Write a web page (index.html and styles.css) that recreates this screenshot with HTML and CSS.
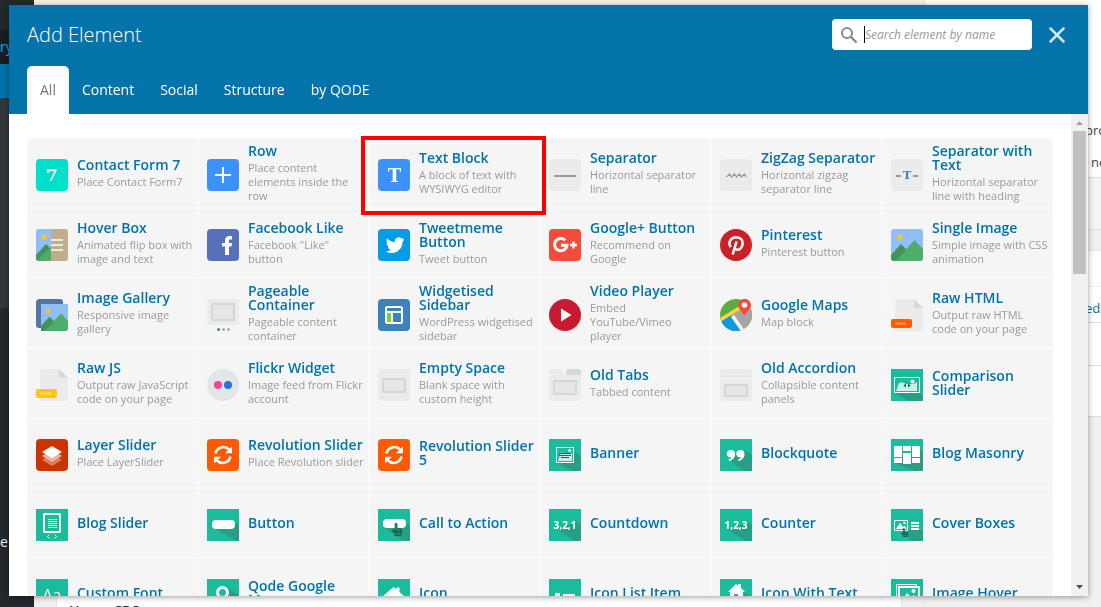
FILE: index.html
```
<!DOCTYPE html>
<html lang="en">

<head>
    <meta charset="UTF-8">
    <meta name="viewport" content="width=device-width, initial-scale=1.0">
    <title>Add Element</title>
    <link rel="stylesheet" href="styles.css">
</head>

<body>
    <!-- SHARED ICON PARTS -->
    <svg class="icon-defs" aria-hidden="true">
        <symbol id="refresh" viewBox="0 0 32 32">
            <rect width="32" height="32" rx="4" fill="#ff5a00" />
            <path d="M8.500 14.500A8 8 0 0 1 22 10.500M23.500 17.500A8 8 0 0 1 10 21.500" fill="none" stroke="#fff" stroke-width="2.500" />
            <path d="M25 7.500v6.800h-7zM7 24.500v-6.800h7z" fill="#fff" />
        </symbol>
        <symbol id="hills" viewBox="0 0 32 32">
            <path d="M0 0h32v32H0z" fill="#90bff5" />
            <circle cx="8.500" cy="8.500" r="2.700" fill="#fdc513" />
            <path d="M0 26l10-11 8 8-6 9H0z" fill="#42935b" />
            <path d="M5 32L23.500 11 32 20v12z" fill="#4dae6c" />
        </symbol>
        <symbol id="hand" viewBox="0 0 12 14">
            <path d="M3.500 1.500a1.500 1.500 0 0 1 3 0V5l4 1a1.500 1.500 0 0 1 1 1.500V10l-1 1.500V14H3.500v-2L.8 8.500a1.200 1.200 0 0 1 1.700-1.500l1 .8z" fill="#176454" />
            <path d="M5 2v6M7 6v2M9 6.500v2M4.500 11.500h5" stroke="#1fa88b" stroke-width="1" />
        </symbol>
    </svg>

    <!-- EDITOR BEHIND THE WINDOW -->
    <div class="page">
        <nav class="sidebar">
            <div class="sidebar-space"></div>
            <a href="#" class="sidebar-top">ry</a>
            <div class="sidebar-current"></div>
            <div class="sidebar-sub"></div>
            <a href="#" class="sidebar-link">e</a>
        </nav>
        <main class="editor">
            <div class="postbox">Home CPC</div>
        </main>
        <aside class="publish">
            <div class="publish-box">
                <p class="publish-text">pro</p>
                <p class="publish-text">no</p>
            </div>
            <div class="publish-footer"></div>
            <div class="publish-gap"></div>
            <div class="publish-title"></div>
            <p class="publish-row">ed</p>
            <div class="publish-line"></div>
            <div class="publish-last"></div>
        </aside>
    </div>

    <!-- ADD ELEMENT WINDOW -->
    <div class="modal" role="dialog" aria-labelledby="modal-title">
        <header class="modal-header">
            <div class="modal-top">
                <h1 id="modal-title">Add Element</h1>
                <label class="search">
                    <svg width="18" height="18" viewBox="0 0 18 18" aria-hidden="true">
                        <circle cx="7" cy="7" r="5" fill="none" stroke="#868b96" stroke-width="2" />
                        <path d="M10.500 10.500l6 6" stroke="#868b96" stroke-width="2.400" />
                    </svg>
                    <span class="caret"></span>
                    <input type="text" placeholder="Search element by name" aria-label="Search element by name">
                </label>
                <button class="close" aria-label="Close">
                    <svg width="16" height="16" viewBox="0 0 16 16">
                        <path d="M1.500 1.500l13 13M14.500 1.500l-13 13" stroke="#d4e7f1" stroke-width="2.500" stroke-linecap="round" />
                    </svg>
                </button>
            </div>
            <nav class="tabs">
                <button class="tab active">All</button>
                <button class="tab">Content</button>
                <button class="tab">Social</button>
                <button class="tab">Structure</button>
                <button class="tab">by QODE</button>
            </nav>
        </header>

        <div class="modal-body">
            <ul class="elements">
                <li><a href="#" class="element">
                    <svg class="icon" viewBox="0 0 32 32"><rect width="32" height="32" rx="4" fill="#00dfca" /><text x="16" y="22" class="glyph serif" font-size="17">7</text></svg>
                    <span class="info"><strong>Contact Form 7</strong><small>Place Contact Form7</small></span>
                </a></li>
                <li><a href="#" class="element">
                    <svg class="icon" viewBox="0 0 32 32"><rect width="32" height="32" rx="4" fill="#3c92fd" /><path d="M16 8v16M8 16h16" stroke="#fff" stroke-width="2" /></svg>
                    <span class="info"><strong>Row</strong><small>Place content elements inside the row</small></span>
                </a></li>
                <li><a href="#" class="element marked">
                    <svg class="icon" viewBox="0 0 32 32"><rect width="32" height="32" rx="4" fill="#3c92fd" /><text x="16.500" y="23" class="glyph serif" font-size="18">T</text></svg>
                    <span class="info"><strong>Text Block</strong><small>A block of text with WYSIWYG editor</small></span>
                </a></li>
                <li><a href="#" class="element">
                    <svg class="icon" viewBox="0 0 32 32"><rect width="32" height="32" rx="4" fill="#ebebeb" /><path d="M5 17h22" stroke="#999" stroke-width="2" /></svg>
                    <span class="info"><strong>Separator</strong><small>Horizontal separator line</small></span>
                </a></li>
                <li><a href="#" class="element">
                    <svg class="icon" viewBox="0 0 32 32"><rect width="32" height="32" rx="4" fill="#ebebeb" /><path d="M6.500 18l3-3 2 3 3-3 2 3 3-3 2 3 3-3 1.500 3" fill="none" stroke="#999" stroke-width="1.300" /></svg>
                    <span class="info"><strong>ZigZag Separator</strong><small>Horizontal zigzag separator line</small></span>
                </a></li>
                <li><a href="#" class="element">
                    <svg class="icon" viewBox="0 0 32 32"><rect width="32" height="32" rx="4" fill="#ebebeb" /><path d="M5 17h5M22 17h5" stroke="#999" stroke-width="2" /><text x="16" y="20" class="glyph serif blue" font-size="11">T</text></svg>
                    <span class="info"><strong>Separator with Text</strong><small>Horizontal separator line with heading</small></span>
                </a></li>

                <li><a href="#" class="element">
                    <svg class="icon rounded" viewBox="0 0 32 32"><path d="M0 0h15v32H0z" fill="#90bff5" /><circle cx="8.500" cy="8.500" r="2.700" fill="#fdc513" /><path d="M0 26l10-11 5 5v12H0z" fill="#42935b" /><path d="M0 32l15-14v14z" fill="#4dae6c" /><path d="M15 0h17v32H15z" fill="#bfae8e" /><path d="M15 11h12M15 16h12M15 21h12" stroke="#efe9dd" stroke-width="2" /></svg>
                    <span class="info"><strong>Hover Box</strong><small>Animated flip box with image and text</small></span>
                </a></li>
                <li><a href="#" class="element">
                    <svg class="icon" viewBox="0 0 32 32"><rect width="32" height="32" rx="4" fill="#5671b9" /><path d="M18 26v-8.500h-3V14h3v-2.500C18 8.500 19.800 7 22.500 7H25v3.500h-1.800c-1 0-1.300.5-1.300 1.400V14H25l-.5 3.500H22V26z" fill="#fff" /></svg>
                    <span class="info"><strong>Facebook Like</strong><small>Facebook "Like" button</small></span>
                </a></li>
                <li><a href="#" class="element">
                    <svg class="icon" viewBox="0 0 32 32"><rect width="32" height="32" rx="4" fill="#009de6" /><path d="M26.500 10.200c-.7.300-1.400.5-2.200.6.800-.5 1.400-1.200 1.700-2.100-.7.400-1.600.8-2.400 1a3.900 3.900 0 0 0-6.700 3.500c-3.200-.2-6-1.700-7.900-4-1 1.800-.5 4.100 1.200 5.200-.6 0-1.200-.2-1.700-.5 0 1.900 1.300 3.500 3.100 3.900-.6.100-1.200.2-1.800.1.500 1.500 1.900 2.600 3.600 2.700A7.900 7.900 0 0 1 7.700 22.200 11 11 0 0 0 24.600 12.300c.7-.5 1.400-1.200 1.900-2.100z" fill="#fff" /></svg>
                    <span class="info"><strong>Tweetmeme Button</strong><small>Tweet button</small></span>
                </a></li>
                <li><a href="#" class="element">
                    <svg class="icon" viewBox="0 0 32 32"><rect width="32" height="32" rx="4" fill="#f54b3a" /><path d="M16.200 11.200a6.200 6.200 0 1 0 1.800 5H12" fill="none" stroke="#fff" stroke-width="3" /><path d="M24.500 12.500v7M21 16h7" stroke="#fff" stroke-width="2.400" /></svg>
                    <span class="info"><strong>Google+ Button</strong><small>Recommend on Google</small></span>
                </a></li>
                <li><a href="#" class="element">
                    <svg class="icon" viewBox="0 0 32 32"><circle cx="16" cy="16" r="16" fill="#cc2027" /><path d="M10.800 18C7.500 14 10.500 8.300 16.200 8.300c5 0 7 3.400 6.400 7-.6 4-3.500 6-6 5.300-1.200-.3-1.800-1-2-1.800M16.500 12.500L12.700 25.500" fill="none" stroke="#fff" stroke-width="2.500" /></svg>
                    <span class="info"><strong>Pinterest</strong><small>Pinterest button</small></span>
                </a></li>
                <li><a href="#" class="element">
                    <svg class="icon rounded" viewBox="0 0 32 32"><use href="#hills" /></svg>
                    <span class="info"><strong>Single Image</strong><small>Simple image with CSS animation</small></span>
                </a></li>

                <li><a href="#" class="element">
                    <svg class="icon rounded" viewBox="0 0 32 32"><rect width="27" height="29" rx="3" fill="#5477a2" /><use href="#hills" x="5" y="5" width="27" height="27" /></svg>
                    <span class="info"><strong>Image Gallery</strong><small>Responsive image gallery</small></span>
                </a></li>
                <li><a href="#" class="element">
                    <svg class="icon" viewBox="0 0 32 32"><rect width="32" height="26" rx="4" fill="#ebebeb" /><path d="M5 5h22v16H5z" fill="#e6e6e6" stroke="#d6d6d6" stroke-width="2" /><circle cx="11.500" cy="30.500" r="1.500" fill="#4a76a8" /><circle cx="16.500" cy="30.500" r="1.500" fill="#94aecd" /><circle cx="21.500" cy="30.500" r="1.500" fill="#94aecd" /></svg>
                    <span class="info"><strong>Pageable Container</strong><small>Pageable content container</small></span>
                </a></li>
                <li><a href="#" class="element">
                    <svg class="icon" viewBox="0 0 32 32"><rect width="32" height="32" rx="4" fill="#3d82b9" /><rect x="8" y="8" width="16" height="16" rx="1.500" fill="none" stroke="#fff" stroke-width="2" /><path d="M8 13h16M14 13v11" stroke="#fff" stroke-width="2" /><path d="M9 14h4v9H9z" fill="#7ed321" /></svg>
                    <span class="info"><strong>Widgetised Sidebar</strong><small>WordPress widgetised sidebar</small></span>
                </a></li>
                <li><a href="#" class="element">
                    <svg class="icon" viewBox="0 0 32 32"><circle cx="16" cy="16" r="16" fill="#c61b30" /><path d="M12 9.500v13L22.500 16z" fill="#fff" /></svg>
                    <span class="info"><strong>Video Player</strong><small>Embed YouTube/Vimeo<br>player</small></span>
                </a></li>
                <li><a href="#" class="element">
                    <svg class="icon" viewBox="0 0 32 32">
                        <clipPath id="globe"><circle cx="16" cy="16" r="16" /></clipPath>
                        <g clip-path="url(#globe)"><path d="M0 0h32v32H0z" fill="#5dac3f" /><path d="M0 22l22-14h10v24H0z" fill="#a5a5a5" /><path d="M0 23l11-7 12 16H0z" fill="#0a9be3" /><path d="M0 21L21 8" stroke="#fdd835" stroke-width="3.500" /><path d="M12.500 17L23 32" stroke="#fff" stroke-width="3.500" /></g>
                        <path d="M24.500 16.500C21 11.500 18 9.500 18 6.300a6.500 6.500 0 0 1 13 0c0 3.200-3 5.200-6.500 10.200z" fill="#f44b38" /><circle cx="24.500" cy="6" r="2.800" fill="#fff" />
                    </svg>
                    <span class="info"><strong>Google Maps</strong><small>Map block</small></span>
                </a></li>
                <li><a href="#" class="element">
                    <svg class="icon" viewBox="0 0 32 32"><path d="M7 0h16l9 9v23H4V3a3 3 0 0 1 3-3z" fill="#ebebeb" /><path d="M23 0l9 9h-9z" fill="#d8d8d8" /><rect y="20" width="21" height="9" rx="2" fill="#ff5a00" /><path d="M4 24.500h11" stroke="#ff9c66" stroke-width="2" /></svg>
                    <span class="info"><strong>Raw HTML</strong><small>Output raw HTML code on your page</small></span>
                </a></li>

                <li><a href="#" class="element">
                    <svg class="icon" viewBox="0 0 32 32"><path d="M7 0h16l9 9v23H4V3a3 3 0 0 1 3-3z" fill="#ebebeb" /><path d="M23 0l9 9h-9z" fill="#d8d8d8" /><rect y="20" width="21" height="9" rx="2" fill="#ffc60d" /><path d="M4 24.500h11" stroke="#ffe48a" stroke-width="2" /></svg>
                    <span class="info"><strong>Raw JS</strong><small>Output raw JavaScript code on your page</small></span>
                </a></li>
                <li><a href="#" class="element">
                    <svg class="icon" viewBox="0 0 32 32"><circle cx="16" cy="16" r="16" fill="#e2e6e7" /><circle cx="11" cy="16" r="4" fill="#fa3e9e" /><circle cx="21" cy="16" r="4" fill="#2472e8" /></svg>
                    <span class="info"><strong>Flickr Widget</strong><small>Image feed from Flickr account</small></span>
                </a></li>
                <li><a href="#" class="element">
                    <svg class="icon" viewBox="0 0 32 32"><rect width="32" height="32" rx="4" fill="#ebebeb" /><path d="M5 10h22v13H5z" fill="#e6e6e6" stroke="#d6d6d6" stroke-width="2" /></svg>
                    <span class="info"><strong>Empty Space</strong><small>Blank space with custom height</small></span>
                </a></li>
                <li><a href="#" class="element">
                    <svg class="icon" viewBox="0 0 32 32"><path d="M3 0h10a2 2 0 0 1 2 2v4h17v23a3 3 0 0 1-3 3H3a3 3 0 0 1-3-3V3a3 3 0 0 1 3-3z" fill="#ebebeb" /><path d="M17 6V3a3 3 0 0 1 3-3h9a3 3 0 0 1 3 3v3z" fill="#d8d8d8" /><path d="M5 12h22v13H5z" fill="#e6e6e6" stroke="#d6d6d6" stroke-width="2" /></svg>
                    <span class="info"><strong>Old Tabs</strong><small>Tabbed content</small></span>
                </a></li>
                <li><a href="#" class="element">
                    <svg class="icon" viewBox="0 0 32 32"><path d="M3 0h26a3 3 0 0 1 3 3v6H0V3a3 3 0 0 1 3-3zM0 10h32v19a3 3 0 0 1-3 3H3a3 3 0 0 1-3-3z" fill="#ebebeb" /><path d="M5 16h22v11H5z" fill="#e6e6e6" stroke="#d6d6d6" stroke-width="2" /></svg>
                    <span class="info"><strong>Old Accordion</strong><small>Collapsible content panels</small></span>
                </a></li>
                <li><a href="#" class="element">
                    <svg class="icon" viewBox="0 0 32 32"><path d="M0 0h32v32H0z" fill="#1bbc9b" /><path d="M29 24l3 2v6H17L5 24z" fill="#279f85" /><path d="M3.500 8.500h25v15h-25z" fill="#1bbc9b" stroke="#fff" /><path d="M5 22l3-8c4-2 5 1 8 1s7 1 10-2v9z" fill="#c9efe7" /><circle cx="21.500" cy="12.500" r="2" fill="#fff" /><path d="M15 14.500v4L12.500 16.500zM17 14.500v4l2.500-2z" fill="#176454" /></svg>
                    <span class="info"><strong>Comparison Slider</strong></span>
                </a></li>

                <li><a href="#" class="element">
                    <svg class="icon" viewBox="0 0 32 32"><rect width="32" height="32" rx="4" fill="#cd3301" /><path d="M16 15l10 6-10 6-10-6z" fill="#e07b5a" /><path d="M16 11l10 6-10 6-10-6z" fill="#edb5a1" /><path d="M16 7l10 6-10 6-10-6z" fill="#fff" /></svg>
                    <span class="info"><strong>Layer Slider</strong><small>Place LayerSlider</small></span>
                </a></li>
                <li><a href="#" class="element">
                    <svg class="icon" viewBox="0 0 32 32"><use href="#refresh" /></svg>
                    <span class="info"><strong>Revolution Slider</strong><small>Place Revolution slider</small></span>
                </a></li>
                <li><a href="#" class="element">
                    <svg class="icon" viewBox="0 0 32 32"><use href="#refresh" /></svg>
                    <span class="info"><strong>Revolution Slider 5</strong></span>
                </a></li>
                <li><a href="#" class="element">
                    <svg class="icon" viewBox="0 0 32 32"><path d="M0 0h32v32H0z" fill="#1bbc9b" /><path d="M25 12l7 5v15h-9L7 24z" fill="#279f85" /><path d="M7.500 8.500h17v15h-17z" fill="#1bbc9b" stroke="#fff" /><path d="M9 22l3-9 4 2 7-1v8z" fill="#c9efe7" /><circle cx="20.500" cy="11.500" r="1.500" fill="#fff" /><path d="M10 14.500h12M10 16.500h12M12 18.500h8" stroke="#176454" stroke-width="1" /></svg>
                    <span class="info"><strong>Banner</strong></span>
                </a></li>
                <li><a href="#" class="element">
                    <svg class="icon" viewBox="0 0 32 32"><path d="M0 0h32v32H0z" fill="#1bbc9b" /><path d="M24 11l8 5v16H24L9 21z" fill="#279f85" /><path d="M11 11a4 4 0 0 1 4 4c0 4-2.500 6.500-6 7l-.5-1.500c1.800-.5 2.700-1.300 3-2.300A3.700 3.700 0 1 1 11 11zM20.500 11a4 4 0 0 1 4 4c0 4-2.500 6.500-6 7l-.5-1.500c1.800-.5 2.700-1.300 3-2.300A3.700 3.700 0 1 1 20.500 11z" fill="#fff" /></svg>
                    <span class="info"><strong>Blockquote</strong></span>
                </a></li>
                <li><a href="#" class="element">
                    <svg class="icon" viewBox="0 0 32 32"><path d="M0 0h32v32H0z" fill="#1bbc9b" /><path d="M29 10l3 3v19H25L3 24z" fill="#279f85" /><path d="M3 7h8v11H3zM12 7h8v5h-8zM21 7h8v11h-8zM3 19h8v5H3zM12 14h8v11h-8zM21 19h8v5h-8z" fill="#fff" /></svg>
                    <span class="info"><strong>Blog Masonry</strong></span>
                </a></li>

                <li><a href="#" class="element">
                    <svg class="icon" viewBox="0 0 32 32"><path d="M0 0h32v32H0z" fill="#1bbc9b" /><rect x="8" y="5" width="16" height="18" rx="1" fill="none" stroke="#fff" stroke-width="2" /><path d="M12 10.500h9M12 12.500h9M12 14.500h9M12 16.500h9M12 18.500h9" stroke="#fff" stroke-width="1" /><path d="M13.500 25.500l-2 2 2 2M18.500 25.500l2 2-2 2" fill="none" stroke="#fff" /></svg>
                    <span class="info"><strong>Blog Slider</strong></span>
                </a></li>
                <li><a href="#" class="element">
                    <svg class="icon" viewBox="0 0 32 32"><path d="M0 0h32v32H0z" fill="#1bbc9b" /><path d="M26 12l6 4v16h-3L7 19z" fill="#279f85" /><rect x="5" y="11" width="23" height="9" rx="4" fill="#fff" /></svg>
                    <span class="info"><strong>Button</strong></span>
                </a></li>
                <li><a href="#" class="element">
                    <svg class="icon" viewBox="0 0 32 32"><path d="M0 0h32v32H0z" fill="#1bbc9b" /><path d="M26 13l6 4v15h-7L7 19z" fill="#279f85" /><rect x="5" y="10" width="23" height="9" rx="4" fill="#fff" /><use href="#hand" x="13" y="14" width="12" height="13" /></svg>
                    <span class="info"><strong>Call to Action</strong></span>
                </a></li>
                <li><a href="#" class="element">
                    <svg class="icon" viewBox="0 0 32 32"><path d="M0 0h32v32H0z" fill="#1bbc9b" /><path d="M28 13l4 3v16h-6L7 20z" fill="#279f85" /><text x="16" y="20" class="glyph" font-size="10">3,2,1</text></svg>
                    <span class="info"><strong>Countdown</strong></span>
                </a></li>
                <li><a href="#" class="element">
                    <svg class="icon" viewBox="0 0 32 32"><path d="M0 0h32v32H0z" fill="#1bbc9b" /><path d="M28 13l4 3v16h-6L7 20z" fill="#279f85" /><text x="16" y="20" class="glyph" font-size="10">1,2,3</text></svg>
                    <span class="info"><strong>Counter</strong></span>
                </a></li>
                <li><a href="#" class="element">
                    <svg class="icon" viewBox="0 0 32 32"><path d="M0 0h32v32H0z" fill="#1bbc9b" /><path d="M17 21h15v11H21l-7-6z" fill="#279f85" /><path d="M3.500 11.500h13v10h-13z" fill="none" stroke="#fff" /><path d="M5 20l4-6 3 4 2-1 1.500 3z" fill="#fff" /><circle cx="13.500" cy="14" r="1.200" fill="#fff" /><path d="M20 14h8M20 17h8M20 20h8" stroke="#fff" stroke-width="2" /><use href="#hand" x="9" y="19" width="9" height="9" /></svg>
                    <span class="info"><strong>Cover Boxes</strong></span>
                </a></li>

                <li><a href="#" class="element">
                    <svg class="icon" viewBox="0 0 32 32"><path d="M0 0h32v32H0z" fill="#1bbc9b" /><text x="16" y="22" class="glyph thin" font-size="16">Aa</text></svg>
                    <span class="info"><strong>Custom Font</strong></span>
                </a></li>
                <li><a href="#" class="element">
                    <svg class="icon" viewBox="0 0 32 32"><path d="M0 0h32v32H0z" fill="#1bbc9b" /><path d="M20 9l12 7v16H16z" fill="#279f85" /><path d="M15.500 27l-5-9h10z" fill="#fff" /><circle cx="15.500" cy="13.500" r="5" fill="#1bbc9b" stroke="#fff" stroke-width="3" /></svg>
                    <span class="info"><strong>Qode Google Maps</strong></span>
                </a></li>
                <li><a href="#" class="element">
                    <svg class="icon" viewBox="0 0 32 32"><path d="M0 0h32v32H0z" fill="#1bbc9b" /><path d="M15.500 8l3 2.500V8.500h3V13l6 5.500h-4V27h-16v-8.500h-4z" fill="#fff" /></svg>
                    <span class="info"><strong>Icon</strong></span>
                </a></li>
                <li><a href="#" class="element">
                    <svg class="icon" viewBox="0 0 32 32"><path d="M0 0h32v32H0z" fill="#1bbc9b" /><path d="M6 14h5v5H6zM14 15h12v3H14zM6 22h5v5H6zM14 23h12v3H14z" fill="#fff" /></svg>
                    <span class="info"><strong>Icon List Item</strong></span>
                </a></li>
                <li><a href="#" class="element">
                    <svg class="icon" viewBox="0 0 32 32"><path d="M0 0h32v32H0z" fill="#1bbc9b" /><path d="M24 13l8 5v14H14z" fill="#279f85" /><path d="M16 5l2 2V5h3v4l4 4h-2v7h-5v-5h-4v5h-4v-7H8z" fill="#fff" /></svg>
                    <span class="info"><strong>Icon With Text</strong></span>
                </a></li>
                <li><a href="#" class="element">
                    <svg class="icon" viewBox="0 0 32 32"><path d="M0 0h32v32H0z" fill="#1bbc9b" /><path d="M5.500 24V5.500h20V8" fill="none" stroke="#fff" /><path d="M8 8h20v18H8z" fill="#1bbc9b" stroke="#fff" stroke-width="2" /><path d="M10 24l6-10 4 4 3-2 3 8z" fill="#fff" /><circle cx="22.500" cy="12" r="2" fill="#fff" /></svg>
                    <span class="info"><strong>Image Hover</strong></span>
                </a></li>
            </ul>
            <div class="scrollbar" aria-hidden="true">
                <svg width="17" height="16" viewBox="0 0 17 16"><path d="M5 11l3.500-4 3.500 4z" fill="#a3a3a3" /></svg>
                <div class="thumb"></div>
                <svg width="17" height="17" viewBox="0 0 17 17"><path d="M5 6h7l-3.500 4z" fill="#505050" /></svg>
            </div>
        </div>
    </div>
</body>

</html>
```
FILE: styles.css
```
*,
*::before,
*::after {
    box-sizing: border-box;
    margin: 0;
    padding: 0;
}

body {
    height: 100vh;
    overflow: hidden;
    font-family: "Open Sans", sans-serif;
    font-size: 14px;
    background-color: #f1f1f1;
}

button {
    border: none;
    background: none;
    font: inherit;
    cursor: pointer;
}

a {
    text-decoration: none;
}

.icon-defs {
    position: absolute;
    width: 0;
    height: 0;
}

/* Editor behind the window */

.page {
    display: flex;
    height: 100vh;
    overflow: hidden;
}

.sidebar {
    display: flex;
    flex-direction: column;
    flex: none;
    width: 34px;
    background-color: #23282d;
}

.sidebar-space {
    height: 30px;
}

.sidebar-top {
    height: 34px;
    line-height: 34px;
    color: #00b9eb;
    background-color: #191e23;
}

.sidebar-current {
    height: 34px;
    background-color: #0073aa;
}

.sidebar-sub {
    height: 210px;
    background-color: #32373c;
}

.sidebar-link {
    margin-top: 224px;
    line-height: 20px;
    color: #eee;
}

.editor {
    flex: 1;
    display: flex;
    padding: 0 22px;
}

.postbox {
    flex: 1;
    display: flex;
    align-items: flex-end;
    height: 616px;
    margin-top: 5px;
    padding-left: 12px;
    font-weight: 600;
    color: #23282d;
    background-color: #fff;
    border: 1px solid #e5e5e5;
}

.publish {
    flex: none;
    width: 177px;
    overflow: hidden;
    white-space: nowrap;
    border-left: 1px solid #e5e5e5;
}

.publish-box {
    height: 178px;
    padding: 120px 0 0 160px;
    background-color: #fff;
    border-bottom: 1px solid #ddd;
}

.publish-text {
    margin-bottom: 12px;
    font-size: 13px;
    line-height: 20px;
    color: #444;
}

.publish-text + .publish-text {
    padding-left: 6px;
}

.publish-footer {
    height: 52px;
    background-color: #f5f5f5;
    border-bottom: 1px solid #e0e0e0;
}

.publish-gap {
    height: 21px;
    border-bottom: 1px solid #e5e5e5;
}

.publish-title {
    height: 36px;
    background-color: #fff;
    border-bottom: 1px solid #eee;
}

.publish-row {
    height: 36px;
    padding-left: 160px;
    font-size: 13px;
    line-height: 42px;
    color: #0073aa;
    background-color: #fff;
    border-bottom: 1px solid #ddd;
}

.publish-line,
.publish-last {
    height: 43px;
    background-color: #fff;
    border-bottom: 1px solid #ddd;
}

.publish-last {
    height: 51px;
}

/* Window */

.modal {
    position: fixed;
    top: 5px;
    right: 13px;
    bottom: 11px;
    left: 9px;
    display: flex;
    flex-direction: column;
    background-color: #fff;
    box-shadow: 0 1px 6px rgba(0, 0, 0, 0.4);
}

.modal-header {
    flex: none;
    padding: 0 18px;
    color: #fff;
    background-color: #0473aa;
}

.modal-top {
    display: flex;
    align-items: center;
    height: 59px;
}

.modal-top h1 {
    margin-right: auto;
    font-size: 20px;
    font-weight: 300;
}

.search {
    display: flex;
    align-items: center;
    width: 200px;
    height: 31px;
    padding: 0 8px;
    background-color: #fff;
    border-radius: 4px;
}

.caret {
    flex: none;
    width: 1px;
    height: 17px;
    margin-left: 6px;
    background-color: #000;
}

.search input {
    flex: 1;
    min-width: 0;
    border: none;
    outline: none;
    font-family: inherit;
    font-size: 12px;
    font-style: italic;
}

.search input::placeholder {
    color: #999;
}

.close {
    display: flex;
    margin: 0 5px 0 17px;
}

.tabs {
    display: flex;
    margin-top: 2px;
}

.tab {
    height: 48px;
    padding: 0 13px 2px;
    color: #fff;
}

.tab.active {
    color: #777;
    background-color: #fff;
    border-radius: 5px 5px 0 0;
}

.modal-body {
    flex: 1;
    display: flex;
    min-height: 0;
    overflow: hidden;
}

/* Elements */

.elements {
    flex: 1;
    display: grid;
    grid-template-columns: repeat(6, 1fr);
    grid-auto-rows: 70px;
    padding: 24px 18px;
    list-style: none;
}

.element {
    position: relative;
    display: flex;
    align-items: center;
    gap: 9px;
    height: 70px;
    padding: 0 3px 0 8px;
    background-color: #f5f5f5;
    border: 1px solid #f9f9f9;
}

.element:hover {
    background-color: #fff;
}

/* Red frame round the picked element */
.marked::after {
    content: "";
    position: absolute;
    z-index: 1;
    top: -3px;
    right: -7px;
    bottom: -8px;
    left: -9px;
    border: 4px solid #f00;
}

.icon {
    flex: none;
    align-self: flex-start;
    width: 32px;
    height: 32px;
    margin-top: 20px;
}

.rounded {
    border-radius: 3px;
}

.glyph {
    font-family: "Open Sans", sans-serif;
    font-weight: 700;
    text-anchor: middle;
    fill: #fff;
}

.glyph.serif {
    font-family: "DejaVu Serif", serif;
}

.glyph.blue {
    fill: #3d82b9;
}

.glyph.thin {
    font-weight: 400;
}

.info {
    flex: 1;
    min-width: 0;
    line-height: 14px;
}

.info strong,
.info small {
    display: block;
}

.info strong {
    font-size: 14px;
    font-weight: 600;
    color: #0073aa;
}

.info small {
    margin-top: 3px;
    font-size: 11px;
    color: #999;
}

/* Scrollbar */

.scrollbar {
    flex: none;
    display: flex;
    flex-direction: column;
    width: 17px;
    background-color: #f1f1f1;
}

.thumb {
    height: 143px;
    margin: 1px 2px auto;
    background-color: #c1c1c1;
}
```
